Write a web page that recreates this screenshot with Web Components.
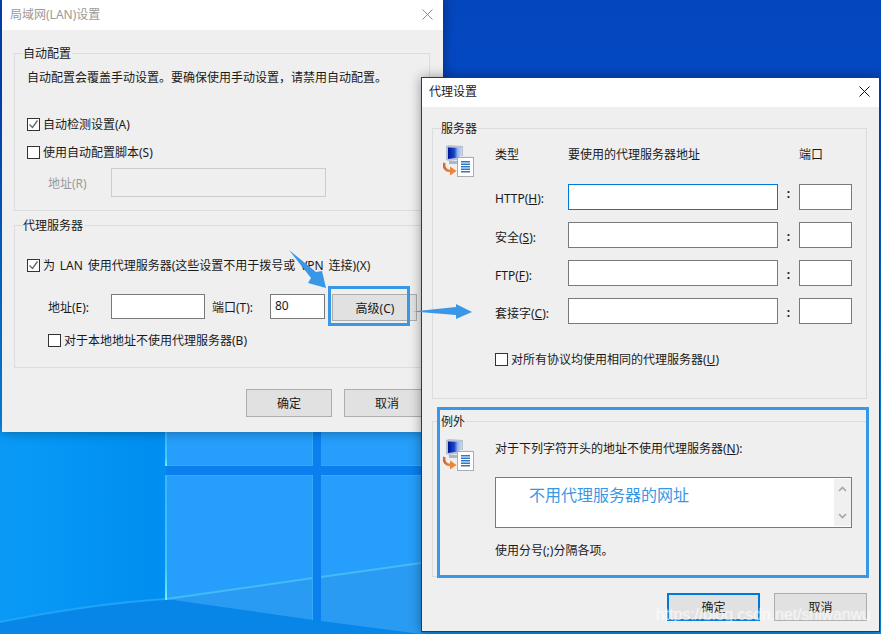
<!DOCTYPE html>
<html lang="zh-CN">
<head>
<meta charset="utf-8">
<title>代理设置</title>
<style>
html,body{margin:0;padding:0;width:881px;height:634px;overflow:hidden;background:#0a7fe0}
body{font:12px/16px "Noto Sans","Noto Sans CJK SC",sans-serif;color:#1a1a1a}
.row{display:flex;align-items:center}
.lbl{padding-top:2px}
u{text-underline-offset:1px}
</style>
</head>
<body>
<x-desktop>
  <x-window title="局域网(LAN)设置" inactive style="left:2px;top:0;width:441px;height:432px">
    <div style="padding:23px 13px 0 12px">
      <x-group label="自动配置" style="height:158px">
        <div style="padding:9px 0 0 12px;display:flex;flex-direction:column">
          <div>自动配置会覆盖手动设置。要确保使用手动设置，请禁用自动配置。</div>
          <x-check checked style="margin-top:30px">自动检测设置(A)</x-check>
          <x-check style="margin-top:12px">使用自动配置脚本(S)</x-check>
          <div class="row" style="margin:8px 0 0 21px;color:#9a9a9a">
            <span class="lbl" style="width:63px">地址(R)</span>
            <x-input disabled style="width:215px;height:29px"></x-input>
          </div>
        </div>
      </x-group>
      <x-group label="代理服务器" style="height:143px;margin-top:14px">
        <div style="padding:24px 0 0 12px;display:flex;flex-direction:column">
          <x-check checked style="word-spacing:1.7px">为 LAN 使用代理服务器(这些设置不用于拨号或 VPN 连接)(X)</x-check>
          <div class="row" style="margin:21px 0 0 21px;height:25px">
            <span class="lbl" style="width:63px">地址(E):</span>
            <x-input style="width:94px;height:25px"></x-input>
            <span class="lbl" style="width:58px;margin-left:7px">端口(T):</span>
            <x-input style="width:55px;height:25px;padding-left:4px;box-sizing:border-box">80</x-input>
            <x-btn style="width:85px;height:27px;margin:2px 0 0 7px"><span style="margin-left:1px">高级(C)</span></x-btn>
          </div>
          <x-check style="margin:13px 0 0 21px">对于本地地址不使用代理服务器(B)</x-check>
        </div>
      </x-group>
      <div class="row" style="margin:21px 0 0 232px;gap:12px">
        <x-btn style="width:86px;height:28px">确定</x-btn>
        <x-btn style="width:86px;height:28px">取消</x-btn>
      </div>
    </div>
  </x-window>

  <x-window title="代理设置" style="left:421px;top:77px;width:459px;height:555px">
    <div style="padding:21px 12px 0 10px">
      <x-group label="服务器" style="height:271px">
        <div style="display:flex;padding:9px 0 0 10px">
          <x-proxy-icon style="margin-right:21px"></x-proxy-icon>
          <div>
            <x-proxy-grid>
              <span class="h">类型</span><span>要使用的代理服务器地址</span><span></span><span>端口</span>
            </x-proxy-grid>
            <x-proxy-row focused style="margin-top:22px"><span>HTTP(<u>H</u>):</span></x-proxy-row>
            <x-proxy-row style="margin-top:12px"><span>安全(<u>S</u>):</span></x-proxy-row>
            <x-proxy-row style="margin-top:12px"><span>FTP(<u>F</u>):</span></x-proxy-row>
            <x-proxy-row style="margin-top:12px"><span>套接字(<u>C</u>):</span></x-proxy-row>
            <x-check style="margin-top:27px">对所有协议均使用相同的代理服务器(<u>U</u>)</x-check>
          </div>
        </div>
      </x-group>
      <x-group label="例外" style="height:156px;margin-top:22px">
        <div style="display:flex;padding:10px 0 0 10px">
          <x-proxy-icon style="margin-right:21px"></x-proxy-icon>
          <div style="padding-top:2px">
            <div>对于下列字符开头的地址不使用代理服务器(<u>N</u>):</div>
            <x-textarea style="margin-top:20px">不用代理服务器的网址</x-textarea>
            <div style="margin-top:15px">使用分号(;)分隔各项。</div>
          </div>
        </div>
      </x-group>
      <div class="row" style="margin-top:16px;justify-content:flex-end;gap:14px">
        <x-btn default style="width:93px;height:28px">确定</x-btn>
        <x-btn style="width:93px;height:28px">取消</x-btn>
      </div>
    </div>
  </x-window>

  <x-mark style="left:328px;top:286px;width:82px;height:40px"></x-mark>
  <x-mark style="left:437px;top:407px;width:432px;height:171px"></x-mark>
  <x-arrows></x-arrows>
  <x-watermark>https://blog.csdn.net/shiwanwu</x-watermark>
</x-desktop>

<script>
function def(name, css, html, init){
  customElements.define(name, class extends HTMLElement{
    connectedCallback(){
      if(this.shadowRoot) return;
      const r=this.attachShadow({mode:'open'});
      r.innerHTML='<style>'+css+'</style>'+(typeof html==='function'?html(this):html);
      if(init) init(this,r);
    }
  });
}
const FONT='font:12px/16px "Noto Sans","Noto Sans CJK SC",sans-serif;';

def('x-desktop',':host{display:block;position:relative;width:881px;height:634px;overflow:hidden}svg{position:absolute;inset:0}',
`<svg width="881" height="634" viewBox="0 0 881 634">
  <defs>
    <linearGradient id="bg" x1="0" y1="0" x2="0" y2="1">
      <stop offset="0" stop-color="#0446bc"/><stop offset=".14" stop-color="#0449c4"/>
      <stop offset=".68" stop-color="#0a92f2"/><stop offset=".8" stop-color="#0090f0"/><stop offset="1" stop-color="#0a8fec"/>
    </linearGradient>
    <linearGradient id="edge" x1="0" y1="0" x2="0" y2="1">
      <stop offset="0" stop-color="#3fb2fb"/><stop offset=".75" stop-color="#43c8fb"/><stop offset="1" stop-color="#6ff0f5"/>
    </linearGradient>
    <linearGradient id="left" x1="0" y1="0" x2="1" y2="0">
      <stop offset="0" stop-color="#0a9af6"/><stop offset=".9" stop-color="#008ff0"/><stop offset="1" stop-color="#0090f2"/>
    </linearGradient>
  </defs>
  <rect width="881" height="634" fill="url(#bg)"/>
  <rect x="0" y="432" width="166" height="202" fill="url(#left)"/>
  <path d="M0 622Q90 604 165 599L421 634H0Z" fill="#0786e8"/>
  <path d="M0 622Q90 604 165 599" fill="none" stroke="#1fa4f6" stroke-width="2"/>
  <rect x="166" y="432" width="255" height="202" fill="#0a7fee"/>
  <path d="M166 599L421 634H166Z" fill="#0786e8"/>
  <rect x="166" y="432" width="147" height="34" fill="#259ffb"/>
  <rect x="321" y="432" width="100" height="34" fill="#259ffb"/>
  <path d="M166 475H313V578L166 599Z" fill="#259ffb"/>
  <path d="M166 599L313 578V620Z" fill="#2a9bf2"/>
  <path d="M321 475H421V563L321 577Z" fill="#259ffb"/>
  <path d="M321 577L421 563V634L321 621Z" fill="#2a9bf2"/>
  <path d="M166 599L313 578" stroke="#45baf8" stroke-width="2"/>
  <path d="M321 577L421 563" stroke="#45baf8" stroke-width="2"/>
  <rect x="165" y="432" width="2" height="34" fill="url(#edge)"/>
  <rect x="165" y="475" width="2" height="125" fill="url(#edge)"/>
  <rect x="167" y="465" width="146" height="1" fill="#35aafb"/><rect x="321" y="465" width="100" height="1" fill="#35aafb"/>
  <rect x="167" y="475" width="146" height="1" fill="#35aafb"/><rect x="321" y="475" width="100" height="1" fill="#35aafb"/>
  <rect x="312" y="432" width="1" height="34" fill="#35aafb"/><rect x="312" y="475" width="1" height="145" fill="#35aafb"/>
</svg><slot></slot>`);

def('x-window',
`:host{display:block;position:absolute;box-sizing:border-box;background:#efefef;box-shadow:0 0 11px rgba(0,0,0,.38)}
 :host(:not([inactive])){border:1px solid #1d3d66}
 .t{display:flex;align-items:center;justify-content:space-between;box-sizing:border-box;background:#fff;height:29px;padding:0 9px 1px 7px;color:#1a1a1a}
 :host(:not([inactive])) svg{margin-bottom:2px}
 :host([inactive]) .t{color:#9a9a9a;height:30px;padding:0 10px 0 8px;align-items:flex-start}
 :host([inactive]) .t span{margin-top:7px}
 :host([inactive]) svg{margin-top:9px;stroke:#8c8c8c}
 svg{stroke:#111;fill:none;display:block}`,
h=>`<div class="t"><span>${h.getAttribute('title')}</span><svg width="11" height="11" viewBox="0 0 11 11"><path d="M.5.5l10 10M10.5.5l-10 10" stroke-width="1"/></svg></div><slot></slot>`);

def('x-group',
`:host{display:block;box-sizing:border-box;border:1px solid #dcdcdc}
 .l{width:fit-content;height:16px;margin:-9px 0 -1px 8px;padding:1px 1px 0 0;background:#efefef;color:#1a1a1a;${FONT}}`,
h=>`<div class="l">${h.getAttribute('label')}</div><slot></slot>`);

def('x-check',
`:host{display:flex;align-items:center;height:16px;gap:3px}
 .b{box-sizing:border-box;width:13px;height:13px;border:1px solid #333;background:#fff;display:block;flex:none}
 .x{padding-top:2px}
 svg{display:block}`,
h=>`<span class="b">${h.hasAttribute('checked')?'<svg width="11" height="11" viewBox="0 0 11 11"><path d="M1.5 5.5l3 3 5-7" fill="none" stroke="#666" stroke-width="1.3"/></svg>':''}</span><span class="x"><slot></slot></span>`);

def('x-input',
`:host{display:block;box-sizing:border-box;border:1px solid #7a7a7a;background:#fff;flex:none;line-height:21px}
 :host([disabled]){border-color:#ccc;background:#efefef}
 :host([focused]){border-color:#0078d7}`,
'<slot></slot>');

def('x-btn',
`:host{display:flex;align-items:center;justify-content:center;box-sizing:border-box;flex:none;background:#e1e1e1;border:1px solid #adadad;color:#1a1a1a;padding-top:2px}
 :host([default]){border:2px solid #0078d7}`,
'<slot></slot>');

def('x-proxy-grid',
`:host{display:grid;grid-template-columns:73px 231px 53px;height:15px;padding-top:2px}
 ::slotted(span:nth-child(3)){display:none}`,
'<slot></slot>');

def('x-proxy-row',
`:host{display:grid;grid-template-columns:73px 210px 21px 53px;height:26px}
 .lab{padding-top:7px;line-height:16px}
 :host(:not([focused])) .lab{padding-top:8px}
 .c{text-align:center;font-weight:700;line-height:16px;padding-top:7px}
 :host([focused]) .c{padding-top:2px}`,
h=>`<div class="lab"><slot></slot></div><x-input ${h.hasAttribute('focused')?'focused':''}></x-input><div class="c">:</div><x-input></x-input>`);

def('x-textarea',
`:host{display:block;box-sizing:border-box;width:357px;height:51px;border:1px solid #7a7a7a;background:#fff;position:relative}
 .w{display:flex;height:100%}
 .x{flex:1;padding:7px 0 0 33px;font-size:16px;line-height:20px;color:#3a97e6}
 .s{width:17px;margin:1px 0;background:#f0f0f0;display:flex;flex-direction:column;justify-content:space-between;align-items:center;padding:7px 0;box-sizing:border-box}
 svg{display:block;fill:none;stroke:#a6a6a6;stroke-width:1.6}`,
`<div class="w"><div class="x"><slot></slot></div><div class="s">
 <svg width="9" height="6" viewBox="0 0 9 6"><path d="M1 5l3.5-3.5L8 5"/></svg>
 <svg width="9" height="6" viewBox="0 0 9 6"><path d="M1 1l3.5 3.5L8 1"/></svg></div></div>`);

def('x-proxy-icon',':host{display:block;width:31px;height:32px;flex:none}svg{display:block}',
`<svg width="31" height="32" viewBox="0 0 31 32">
  <defs>
   <linearGradient id="s" x1="0" y1="0" x2="1" y2="0"><stop offset="0" stop-color="#00129a"/><stop offset=".45" stop-color="#1848c8"/><stop offset=".7" stop-color="#9cb8ee"/><stop offset="1" stop-color="#c8d8f4"/></linearGradient>
   <linearGradient id="o" x1="0" y1="0" x2="1" y2="0"><stop offset="0" stop-color="#c9683a"/><stop offset="1" stop-color="#f08a3a"/></linearGradient>
  </defs>
  <path d="M3 1l3-1 14 1v13l-14 2-3-1z" fill="#b9c2cf"/>
  <path d="M5 2.500L19 3v9L5 14z" fill="url(#s)"/>
  <path d="M6 16h9v3H6z" fill="#aeb6c2"/>
  <rect x="14.500" y="12.500" width="16" height="19" fill="#fff" stroke="#a9adb2"/>
  <path d="M17 12v-.5h13" stroke="#e4e6ea" fill="none"/>
  <path d="M18 16h9v1.500h-9zM18 18.500h9v1.500h-9zM18 21h9v1.500h-9zM18 23.500h9v1.500h-9zM18 26h9v1.500h-9z" fill="#2f78c8"/>
  <path d="M1.500 18c-1.500 4 1 8 6 8" fill="none" stroke="url(#o)" stroke-width="2.600"/>
  <path d="M7 21.500l6.500 4.500-6.500 4.500z" fill="#ee8436"/>
</svg>`);

def('x-mark',':host{display:block;position:absolute;box-sizing:border-box;border:3px solid #3a97e6;pointer-events:none}','');

def('x-arrows',':host{display:block;position:absolute;inset:0;pointer-events:none}svg{position:absolute;inset:0}',
`<svg width="881" height="634" viewBox="0 0 881 634">
  <path d="M289 250L316 272L322 271L326 288L308 283L311 278Z" fill="#3a97e6"/>
  <path d="M413 311.500L456 307V304L472 312L456 319V315Z" fill="#3a97e6"/>
</svg>`);

def('x-watermark',
`:host{display:block;position:absolute;left:656px;top:606px;font:16px/18px "Liberation Sans",sans-serif;letter-spacing:-.1px;color:rgba(255,255,255,.52);text-shadow:0 0 2px rgba(255,255,255,.5);white-space:nowrap}`,
'<slot></slot>');
</script>
</body>
</html>
